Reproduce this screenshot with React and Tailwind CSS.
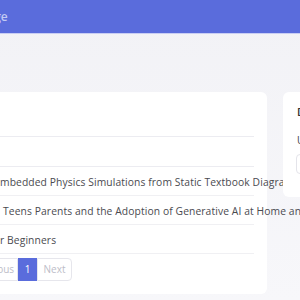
export default function App() {
  const rows = [
    ["Generating E", "mbedded Physics Simulations from Static Textbook Diagrams", "pl-0"],
    ["How ", "Teens Parents and the Adoption of Generative AI at Home and School", "pl-[3px]"],
    ["Machine Learning fo", "r Beginners", "pl-0"],
  ];
  return (
    <div
      className="w-[300px] h-[300px] overflow-hidden bg-gradient-to-b from-[#f2f2f6] to-[#f7f7fa]"
      style={{ fontFamily: '"Open Sans", "Liberation Sans", sans-serif' }}
    >
      <div className="h-[34px] bg-[#5a6cdc] border-b border-[#c9cef3] flex items-center">
        <span className="ml-[-58px] pt-px text-[12px] font-semibold text-[#c3caf3] whitespace-nowrap">
          Home Page
        </span>
      </div>
      <div className="flex gap-4 pt-[58px] ml-[-200px] w-[800px]">
        <div className="w-[467px] shrink-0 bg-white rounded-md pb-[13px]">
          <div className="h-[44px] flex items-center px-[13px] text-[13px] font-semibold text-[#333]">
            Papers
          </div>
          <div className="mx-[13px]">
            <div className="h-[31px] border-t border-b border-[#ececf1] flex items-center text-[10px] font-semibold text-[#333]">
              Title
            </div>
            {rows.map((r, i) => (
              <div
                key={i}
                className="h-[29px] border-b border-[#f0f0f3] flex items-center pt-[3px] text-[10.3px] tracking-[0.1px] text-[#4a4a4f] whitespace-nowrap"
              >
                <span className="w-[187px] shrink-0 flex justify-end overflow-hidden">
                  <span className="shrink-0">{r[0]}</span>
                </span>
                <span className={r[2]}>{r[1]}</span>
              </div>
            ))}
            <div className="mt-[4px] flex text-[10px]">
              <div className="ml-[157px] flex h-[23px]">
                <span className="w-[48px] flex items-center justify-center border border-[#e6e6ec] rounded-l-[4px] text-[#bdbdc8]">
                  Previous
                </span>
                <span className="w-[19px] flex items-center justify-center bg-[#5a6cdc] text-white">
                  1
                </span>
                <span className="w-[35px] flex items-center justify-center border border-[#e6e6ec] rounded-r-[4px] text-[#bdbdc8]">
                  Next
                </span>
              </div>
            </div>
          </div>
        </div>
        <div className="w-[300px] shrink-0 bg-white rounded-md h-[105px] px-[14px]">
          <div className="pt-[12px] text-[11px] font-semibold text-[#333]">Details</div>
          <div className="mt-[12px] text-[10px] text-[#444]">Upload</div>
          <div className="mt-[6px] h-[20px] border border-[#e4e4ea] rounded ml-[-1px]"></div>
        </div>
      </div>
    </div>
  );
}
